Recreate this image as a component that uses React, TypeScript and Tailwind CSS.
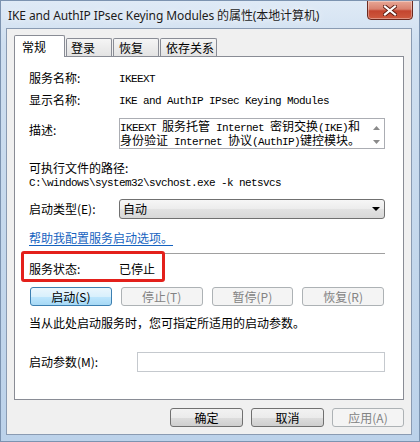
import React from 'react';

const CJK = /([\u3000-\u303f\u3400-\u9fff\uff00-\uffef]+)/;

function Mono({ text }: { text: string }) {
  const parts = text.split(CJK);
  return (
    <>
      {parts.map((p, i) =>
        p === '' ? null : CJK.test(p) ? (
          <span key={i} className="font-['Liberation_Mono','Noto_Sans_CJK_SC',monospace] text-[12px] leading-[14px]">
            {p}
          </span>
        ) : (
          <span key={i} className="font-['Liberation_Mono',monospace] text-[11px] leading-[14px] tracking-[-0.6px] whitespace-pre">
            {p}
          </span>
        )
      )}
    </>
  );
}

function Btn({ children, kind, className }: { children: React.ReactNode; kind: 'normal' | 'focus' | 'disabled'; className?: string }) {
  const k =
    kind === 'focus'
      ? 'border-[#3c7fb1] bg-[linear-gradient(#eaf6fd_0%,#d9f0fc_50%,#bee6fd_51%,#a7d9f5_100%)] text-black'
      : kind === 'disabled'
      ? 'border-[#adb2b5] bg-[#f4f4f4] text-[#838383]'
      : 'border-[#707070] bg-[linear-gradient(#f2f2f2_0%,#ebebeb_50%,#dddddd_51%,#cfcfcf_100%)] text-black';
  return (
    <div className={`h-[19px] border rounded-[3px] flex items-center justify-center text-[12px] leading-[16px] ${k} ${className ?? ''}`}>
      {children}
    </div>
  );
}

export default function App() {
  return (
    <div className="w-[420px] h-[442px] relative overflow-hidden flex flex-col border border-[#7c93b0] bg-[linear-gradient(180deg,#dfeaf6_0%,#cfdff0_10%,#c3d7ec_60%,#bcd2ea_100%)] font-['Noto_Sans_CJK_SC',sans-serif] text-[12px] text-black">
      {/* title bar */}
      <div className="h-[27px] flex items-center pl-[7px] pt-[2px]">
        <span className="font-['Noto_Sans','Noto_Sans_CJK_SC',sans-serif] text-[12px] tracking-[-0.1px] leading-[16px] text-[#1b1b1b] [text-shadow:0_0_6px_#ffffff]">
          IKE and AuthIP IPsec Keying Modules 的属性(本地计算机)
        </span>
      </div>
      {/* close button */}
      <div className="absolute top-[-1px] right-[6px] w-[46px] h-[20px] rounded-b-[4px] border border-[#6b2a20] bg-[linear-gradient(180deg,#e8a796_0%,#d9826f_45%,#c4452f_55%,#cf5a3f_100%)] flex items-center justify-center shadow-[inset_0_0_0_1px_rgba(255,255,255,0.35)]">
        <svg width="14" height="11" viewBox="0 0 14 11">
          <path d="M2 1.5 L12 9.5 M12 1.5 L2 9.5" stroke="#5a1a10" strokeWidth="4" strokeLinecap="square" />
          <path d="M2 1.5 L12 9.5 M12 1.5 L2 9.5" stroke="#ffffff" strokeWidth="2.2" strokeLinecap="square" />
        </svg>
      </div>

      {/* client area */}
      <div className="ml-[5px] w-[406px] h-[407px] border border-[#8a9bb2] bg-[#f0f0f0] pt-[6px] px-[7px] flex flex-col">
        {/* tabs */}
        <div className="h-[21px] flex items-end">
          <div className="relative z-10 h-[22px] -mb-[1px] w-[51px] bg-white border border-b-0 border-[#898c95] rounded-t-[2px] pl-[7px] flex items-center text-[12px] leading-[16px]">
            常规
          </div>
          <div className="ml-[1px] h-[18px] w-[46px] border border-b-0 border-[#898c95] rounded-t-[2px] bg-[linear-gradient(#f5f5f5,#e3e3e3)] pl-[4px] flex items-center leading-[16px]">
            登录
          </div>
          <div className="ml-[1px] h-[18px] w-[46px] border border-b-0 border-[#898c95] rounded-t-[2px] bg-[linear-gradient(#f5f5f5,#e3e3e3)] pl-[5px] flex items-center leading-[16px]">
            恢复
          </div>
          <div className="ml-[1px] h-[18px] w-[57px] border border-b-0 border-[#898c95] rounded-t-[2px] bg-[linear-gradient(#f5f5f5,#e3e3e3)] pl-[5px] flex items-center leading-[16px]">
            依存关系
          </div>
        </div>

        {/* panel */}
        <div className="h-[344px] border border-[#898c95] bg-white pl-[14px] pr-[18px] flex flex-col">
          <div className="mt-[13px] h-[16px] flex items-center leading-[16px]">
            <div className="w-[90px]">服务名称:</div>
            <div className="leading-[14px]"><Mono text="IKEEXT" /></div>
          </div>
          <div className="mt-[6px] h-[16px] flex items-center leading-[16px]">
            <div className="w-[90px]">显示名称:</div>
            <div className="leading-[14px]"><Mono text="IKE and AuthIP IPsec Keying Modules" /></div>
          </div>
          <div className="mt-[10px] h-[31px] flex">
            <div className="w-[90px] pt-[4px] leading-[16px]">描述:</div>
            <div className="flex-1 border border-[#abadb3] flex">
              <div className="flex-1 leading-[14px] flex flex-col">
                <div className="h-[14px] whitespace-nowrap"><Mono text="IKEEXT 服务托管 Internet 密钥交换(IKE)和" /></div>
                <div className="h-[14px] whitespace-nowrap"><Mono text="身份验证 Internet 协议(AuthIP)键控模块。" /></div>
              </div>
              <div className="w-[16px] flex flex-col items-center justify-between pt-[7px] pb-[4px]">
                <svg width="7" height="4" viewBox="0 0 7 4"><path d="M0 4 L3.5 0 L7 4 Z" fill="#8a8a8a" /></svg>
                <svg width="7" height="4" viewBox="0 0 7 4"><path d="M0 0 L3.5 4 L7 0 Z" fill="#8a8a8a" /></svg>
              </div>
            </div>
          </div>
          <div className="mt-[11px] h-[16px] flex items-center leading-[16px]">可执行文件的路径:</div>
          <div className="h-[14px] flex items-center leading-[14px]">
            <Mono text="C:\windows\system32\svchost.exe -k netsvcs" />
          </div>
          <div className="mt-[9px] h-[20px] flex items-center">
            <div className="w-[90px] leading-[16px]">启动类型(E):</div>
            <div className="flex-1 h-[20px] border border-[#707070] rounded-[3px] bg-[linear-gradient(#f6f6f6_0%,#ececec_50%,#e2e2e2_51%,#d8d8d8_100%)] flex items-center pl-[3px] pr-[4px] leading-[16px]">
              <span className="flex-1">自动</span>
              <svg width="8" height="4" viewBox="0 0 8 4"><path d="M0 0 L4 4 L8 0 Z" fill="#000000" /></svg>
            </div>
          </div>
          <div className="mt-[11px] h-[16px] flex items-center leading-[16px]">
            <span className="text-[#1563c0] underline underline-offset-[2px]">帮助我配置服务启动选项。</span>
          </div>
          <div className="mt-[7px] h-px bg-[#a0a0a0]" />
          <div className="mt-[7px] h-[16px] flex items-center leading-[16px] relative">
            <div className="w-[90px]">服务状态:</div>
            <div>已停止</div>
            <div className="absolute left-[-8px] top-[-10px] w-[144px] h-[31px] border-[3px] border-[#e3201b] rounded-[3px]" />
          </div>
          <div className="mt-[10px] px-[1px] grid grid-cols-4 gap-[9px]">
            <Btn kind="focus">启动(S)</Btn>
            <Btn kind="disabled">停止(T)</Btn>
            <Btn kind="disabled">暂停(P)</Btn>
            <Btn kind="disabled">恢复(R)</Btn>
          </div>
          <div className="mt-[9px] h-[16px] flex items-center leading-[16px]">当从此处启动服务时，您可指定所适用的启动参数。</div>
          <div className="mt-[21px] h-[20px] flex items-center">
            <div className="w-[108px] leading-[16px]">启动参数(M):</div>
            <div className="flex-1 h-[20px] border border-[#c5c9ce] bg-white" />
          </div>
        </div>

        {/* bottom buttons */}
        <div className="mt-[8px] flex justify-end gap-[8px]">
          <Btn kind="normal" className="w-[73px]">确定</Btn>
          <Btn kind="normal" className="w-[73px]">取消</Btn>
          <Btn kind="disabled" className="w-[72px]">应用(A)</Btn>
        </div>
      </div>
    </div>
  );
}
